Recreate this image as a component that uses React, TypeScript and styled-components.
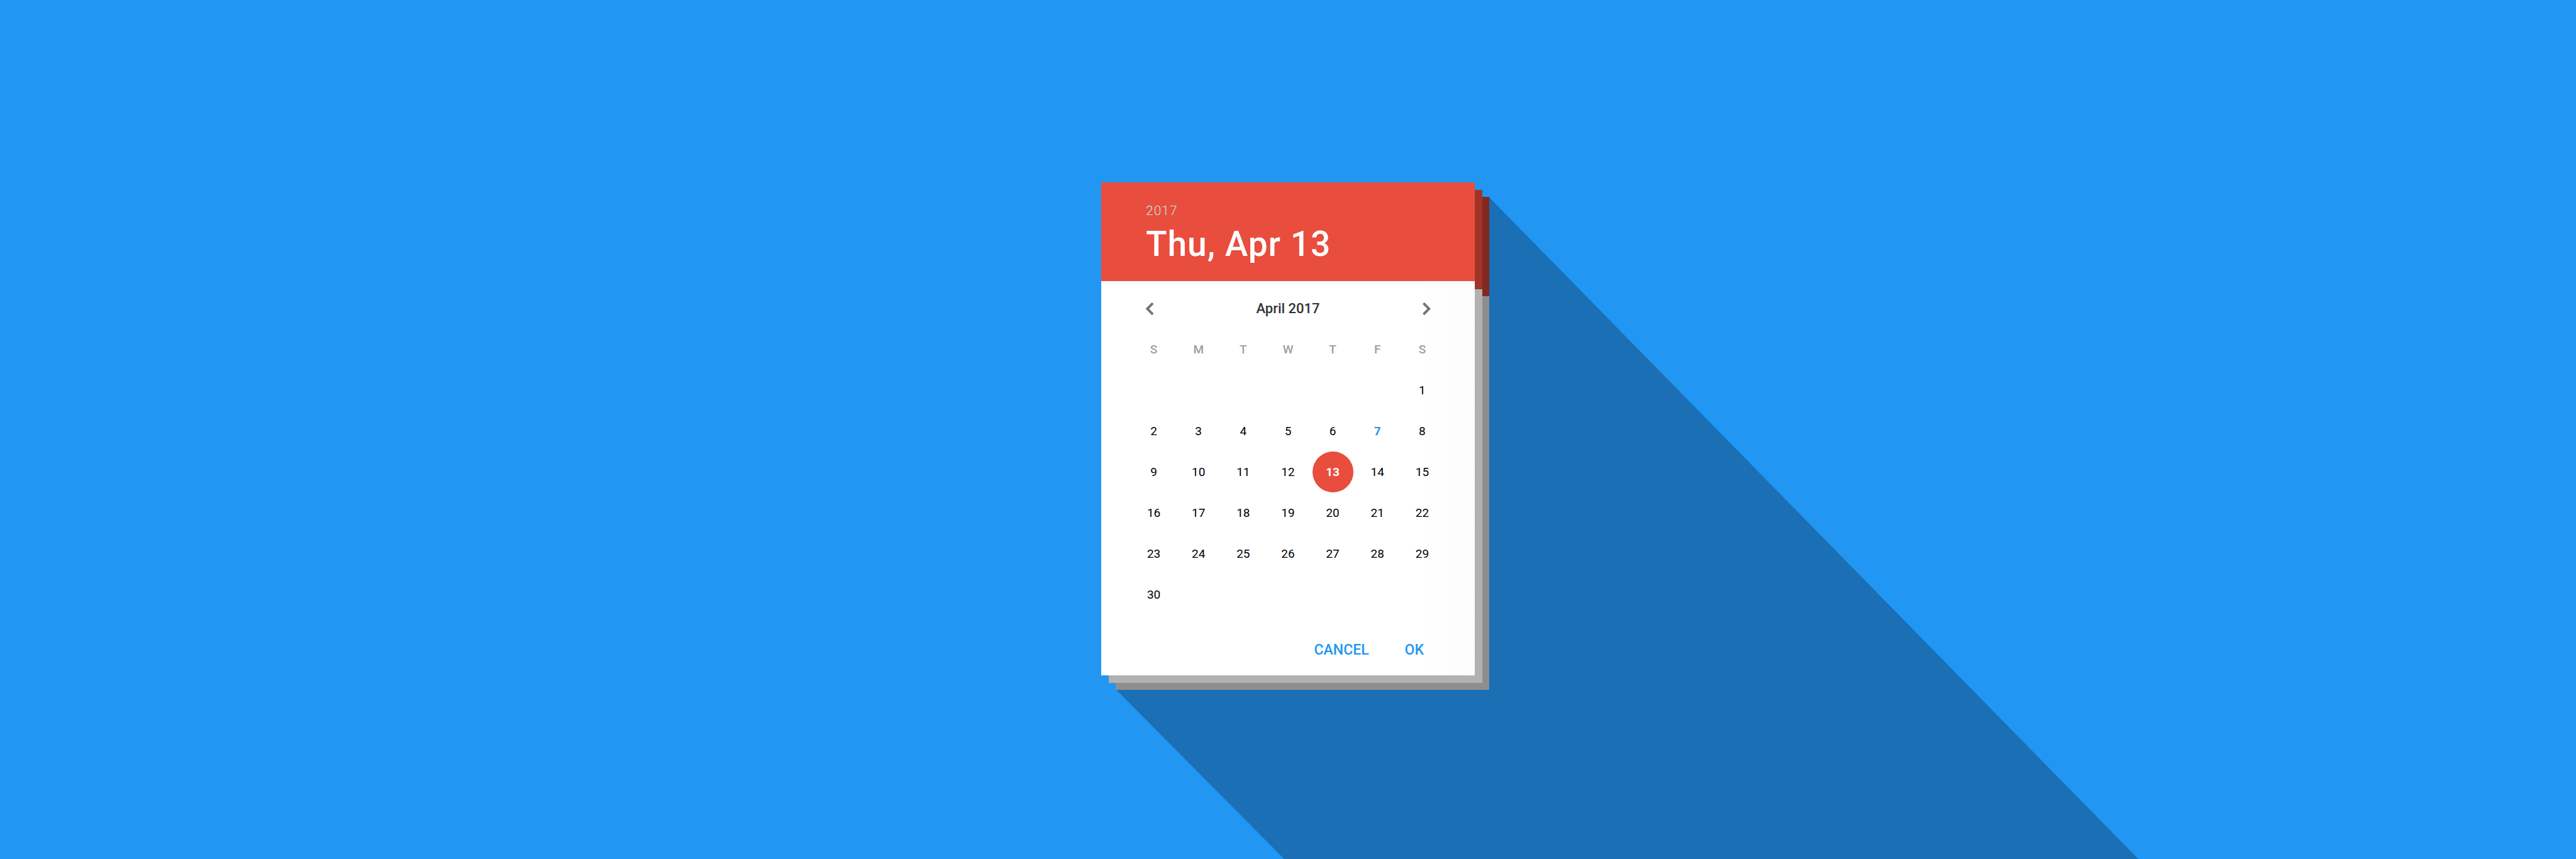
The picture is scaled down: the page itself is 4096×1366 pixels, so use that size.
import React, { useState } from "react";
import styled, { createGlobalStyle } from "styled-components";

const GlobalStyle = createGlobalStyle`
  *, *::before, *::after { box-sizing: border-box; }
  body {
    margin: 0;
    background: #2196f3;
    font-family: Roboto, "Liberation Sans", sans-serif;
  }
  button {
    margin: 0;
    padding: 0;
    border: 0;
    background: none;
    color: inherit;
    font: inherit;
    cursor: pointer;
  }
`;

const Page = styled.main`
  display: flex;
  align-items: center;
  justify-content: center;
  min-height: 100vh;
  padding-bottom: 2px;
  overflow: hidden;
`;

const Stack = styled.div`
  position: relative;
  width: 594px;
`;

const LongShadow = styled.div`
  position: absolute;
  top: 23px;
  left: 23px;
  width: 2600px;
  height: 2000px;
  background: #1a6fb5;
  clip-path: polygon(1px 784px, 594px 0, 595px 2px, 2555px 2000px, 1208px 2000px);
  pointer-events: none;
`;

const Sheet = styled.div<{ $offset: number; $top: string; $body: string }>`
  position: absolute;
  top: ${(p) => p.$offset}px;
  left: ${(p) => p.$offset}px;
  width: 100%;
  height: 100%;
  background: linear-gradient(${(p) => p.$top} 158px, ${(p) => p.$body} 158px);
`;

const Card = styled.section`
  position: relative;
  background: linear-gradient(to right, #fff 85%, #fcfcfc);
`;

const Header = styled.header`
  display: flex;
  flex-direction: column;
  gap: 9px;
  padding: 33px 71px 27px;
  background: #e84d3d;
  color: #fff;
`;

const Year = styled.span`
  font-size: 21px;
  font-weight: 300;
  line-height: 24px;
  letter-spacing: 1px;
  color: #c4e4e0;
`;

const Title = styled.h1`
  margin: 0;
  font-size: 55px;
  font-weight: 500;
  line-height: 64px;
  letter-spacing: 1px;
`;

const Body = styled.div`
  padding: 24px 48px 17px;
`;

const MonthBar = styled.div`
  display: flex;
  align-items: center;
  justify-content: space-between;
  padding: 0 9px;
  margin-bottom: 12px;
`;

const NavButton = styled.button`
  width: 40px;
  height: 40px;
  color: #757575;
  svg { display: block; fill: currentColor; }
`;

const Month = styled.h2`
  margin: 0;
  font-size: 22px;
  font-weight: 500;
  line-height: 40px;
  color: #333;
`;

const Grid = styled.table`
  width: 100%;
  table-layout: fixed;
  border-collapse: collapse;
  text-align: center;
`;

const WeekDay = styled.th`
  height: 65px;
  padding: 0;
  font-size: 19px;
  font-weight: 500;
  color: #9e9e9e;
`;

const Cell = styled.td`
  height: 65px;
  padding: 0;
`;

const DayButton = styled.button<{ $selected: boolean; $today: boolean }>`
  display: block;
  width: 65px;
  height: 65px;
  margin: 0 auto;
  border-radius: 50%;
  font-size: 19px;
  font-weight: ${(p) => (p.$today || p.$selected ? 700 : 400)};
  color: ${(p) => (p.$selected ? "#fff" : p.$today ? "#2196f3" : "#000")};
  background: ${(p) => (p.$selected ? "#e84d3d" : "transparent")};
`;

const Actions = styled.footer`
  display: flex;
  justify-content: flex-end;
  gap: 25px;
  margin-top: 31px;
  padding-right: 17px;
`;

const ActionButton = styled.button`
  height: 48px;
  padding: 0 16px;
  font-size: 23px;
  font-weight: 500;
  color: #2196f3;
`;

const weekDays = [
  ["S", "Sunday"],
  ["M", "Monday"],
  ["T", "Tuesday"],
  ["W", "Wednesday"],
  ["T", "Thursday"],
  ["F", "Friday"],
  ["S", "Saturday"],
];

const firstWeekDay = 6;
const daysInMonth = 30;
const today = 7;

const weeks = Array.from({ length: 6 }, (_, week) =>
  Array.from({ length: 7 }, (_, col) => {
    const day = week * 7 + col - firstWeekDay + 1;
    return day >= 1 && day <= daysInMonth ? day : null;
  })
);

const CHEVRON_LEFT = "M13.5 20L23.7 9.8L26.5 12.6L19.1 20L26.5 27.4L23.7 30.2Z";
const CHEVRON_RIGHT = "M27 20L16.8 9.8L14 12.6L21.4 20L14 27.4L16.8 30.2Z";

function Chevron({ path }: { path: string }) {
  return (
    <svg width="40" height="40" viewBox="0 0 40 40" aria-hidden="true">
      <path d={path} />
    </svg>
  );
}

export default function App() {
  const [selected, setSelected] = useState(13);
  const weekDayName = weekDays[(selected + firstWeekDay - 1) % 7][1].slice(0, 3);

  return (
    <>
      <GlobalStyle />
      <Page>
        <Stack>
          <LongShadow />
          <Sheet $offset={23} $top="#802921" $body="#8e8e8e" />
          <Sheet $offset={12} $top="#a03429" $body="#b1b1b1" />
          <Card>
            <Header>
              <Year>2017</Year>
              <Title>
                {weekDayName}, Apr {selected}
              </Title>
            </Header>
            <Body>
              <MonthBar>
                <NavButton type="button" aria-label="Previous month">
                  <Chevron path={CHEVRON_LEFT} />
                </NavButton>
                <Month>April 2017</Month>
                <NavButton type="button" aria-label="Next month">
                  <Chevron path={CHEVRON_RIGHT} />
                </NavButton>
              </MonthBar>
              <Grid>
                <thead>
                  <tr>
                    {weekDays.map(([letter, name]) => (
                      <WeekDay key={name} scope="col" abbr={name}>
                        {letter}
                      </WeekDay>
                    ))}
                  </tr>
                </thead>
                <tbody>
                  {weeks.map((week, i) => (
                    <tr key={i}>
                      {week.map((day, col) => (
                        <Cell key={col}>
                          {day && (
                            <DayButton
                              type="button"
                              $selected={day === selected}
                              $today={day === today}
                              aria-pressed={day === selected}
                              onClick={() => setSelected(day)}
                            >
                              {day}
                            </DayButton>
                          )}
                        </Cell>
                      ))}
                    </tr>
                  ))}
                </tbody>
              </Grid>
              <Actions>
                <ActionButton type="button">CANCEL</ActionButton>
                <ActionButton type="button">OK</ActionButton>
              </Actions>
            </Body>
          </Card>
        </Stack>
      </Page>
    </>
  );
}
